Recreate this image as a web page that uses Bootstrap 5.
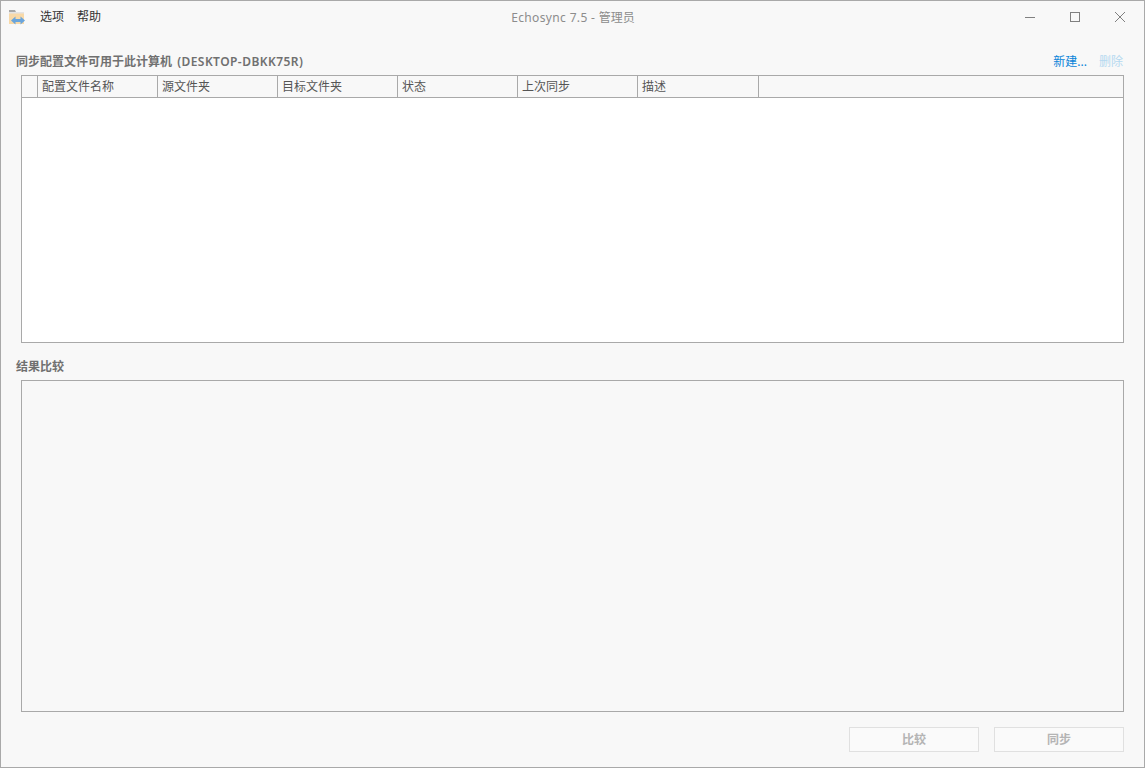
<!DOCTYPE html>
<html lang="zh-CN">
<head>
<meta charset="utf-8">
<title>Echosync 7.5 - 管理员</title>
<link rel="stylesheet" href="https://cdn.jsdelivr.net/npm/bootstrap@5.3.0/dist/css/bootstrap.min.css">
<style>
html,body{height:100%;margin:0}
body{background:#f8f8f8;font-family:"Noto Sans","Noto Sans CJK SC",sans-serif;font-size:12px;color:#444;overflow:hidden}
.app-window{width:1145px;height:768px;border:1px solid #a9a9a9;background:#f8f8f8}
.title-bar{height:32px}
.app-logo{margin-left:8px;margin-top:8px;width:17px;height:17px}
.menu-items{margin-left:14px;gap:13px;margin-top:7px;line-height:18px;color:#333}
.title-text{left:1px;right:0;top:8px;line-height:18px;color:#8c8c8c;text-align:center}
.title-latin{letter-spacing:.35px}
.win-btns{gap:31px;margin-right:17px;margin-top:10px}
.sect-head{padding:20px 20px 0 15px;line-height:18px;height:42px}
.sect-title{font-weight:600;color:#707070;font-size:12px}
.host-name{letter-spacing:.45px;margin-left:2px}
.act-new{color:#0a84d8;margin-right:12px;text-decoration:none}
.act-del{color:#b5d8f0}
.head-actions{margin-right:1px}
.profile-box{margin-left:20px;width:1103px;height:268px;border:1px solid #a9a9a9;background:#fff}
.grid-head{height:22px;background:#f8f8f8;border-bottom:1px solid #a9a9a9;color:#555;line-height:21px}
.grid-head>div{border-right:1px solid #a9a9a9;width:120px;padding-left:4px;flex:none}
.grid-head>.row-mark{width:16px;padding:0}
.grid-head>.col-wide{width:121px}
.grid-head>.col-fill{flex:1 1 auto;border-right:0}
.result-head{padding:15px 0 0 15px;line-height:18px;height:37px}
.result-box{margin-left:20px;width:1103px;height:332px;border:1px solid #a9a9a9;background:#f8f8f8}
.foot-btns{padding:15px 20px 0 0;gap:15px}
.foot-btn,.foot-btn:disabled{width:130px;height:25px;padding:0;border:1px solid #e0e0e0;border-radius:0;background:#fafafa;color:#b4b4b4;font-size:12px;line-height:22px;font-weight:600;opacity:1}
</style>
</head>
<body>
<div class="app-window d-flex flex-column position-relative">
  <div class="title-bar d-flex justify-content-between position-relative">
    <div class="d-flex align-items-start">
      <svg class="app-logo" viewBox="0 0 17 17" aria-hidden="true">
        <path d="M0 1h6l1 2H0z" fill="#a8a8a8"/>
        <path d="M0 3h15v2H0z" fill="#e4e4e4"/>
        <path d="M0 4.500h15V15H0z" fill="#f8d9a8"/>
        <path d="M6.500 7.500 2 11.500l4.500 4v-2.500h5v2.500l4.500-4-4.500-4V10h-5z" fill="#6aa5dc"/>
      </svg>
      <div class="menu-items d-flex"><span>选项</span><span>帮助</span></div>
    </div>
    <div class="title-text position-absolute"><span class="title-latin">Echosync 7.5 - </span>管理员</div>
    <div class="win-btns d-flex">
      <svg width="14" height="12" viewBox="0 0 14 12" aria-hidden="true"><path d="M2 6.500h10" stroke="#808080" fill="none"/></svg>
      <svg width="14" height="12" viewBox="0 0 14 12" aria-hidden="true"><rect x="2.500" y="1.500" width="9" height="9" stroke="#808080" fill="none"/></svg>
      <svg width="14" height="12" viewBox="0 0 14 12" aria-hidden="true"><path d="M2 1l10 10M12 1 2 11" stroke="#808080" fill="none"/></svg>
    </div>
  </div>
  <div class="sect-head d-flex justify-content-between">
    <span class="sect-title">同步配置文件可用于此计算机 <span class="host-name">(DESKTOP-DBKK75R)</span></span>
    <span class="head-actions"><a class="act-new" href="#">新建...</a><span class="act-del">删除</span></span>
  </div>
  <div class="profile-box">
    <div class="grid-head d-flex">
      <div class="row-mark"></div>
      <div>配置文件名称</div>
      <div>源文件夹</div>
      <div>目标文件夹</div>
      <div>状态</div>
      <div>上次同步</div>
      <div class="col-wide">描述</div>
      <div class="col-fill"></div>
    </div>
  </div>
  <div class="result-head sect-title">结果比较</div>
  <div class="result-box"></div>
  <div class="foot-btns d-flex justify-content-end">
    <button type="button" class="btn foot-btn" disabled>比较</button>
    <button type="button" class="btn foot-btn" disabled>同步</button>
  </div>
</div>
<script src="https://cdn.jsdelivr.net/npm/bootstrap@5.3.0/dist/js/bootstrap.bundle.min.js"></script>
</body>
</html>
